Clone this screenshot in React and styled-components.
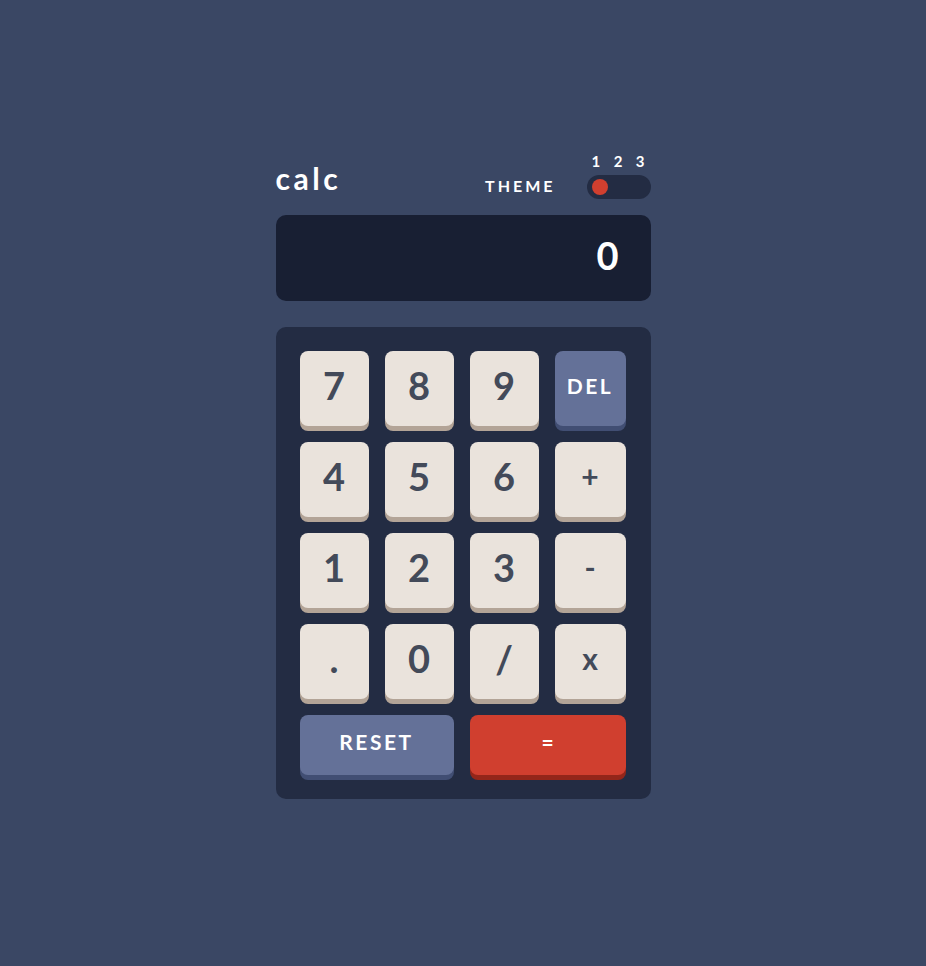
import React from "react";
import styled, { createGlobalStyle } from "styled-components";

const Global = createGlobalStyle`
  html, body { margin: 0; padding: 0; background: #3a4764; }
  body { font-family: "Lato", "Noto Sans", sans-serif; }
  * { box-sizing: border-box; }
`;

const Page = styled.main`
  min-height: 966px;
  background: #3a4764;
  padding-top: 148px;
  display: flex;
  justify-content: center;
`;

const Calc = styled.div`
  width: 375px;
  display: flex;
  flex-direction: column;
`;

const Header = styled.header`
  display: flex;
  align-items: flex-end;
  justify-content: space-between;
  height: 51px;
`;

const Logo = styled.h1`
  margin: 0 0 6px 0;
  font-size: 30px;
  font-weight: 700;
  color: #ffffff;
  line-height: 1;
  letter-spacing: 3.5px;
`;

const ThemeBox = styled.div`
  display: flex;
  align-items: flex-end;
  gap: 31px;
`;

const ThemeLabel = styled.span`
  font-size: 16px;
  font-weight: 700;
  letter-spacing: 3px;
  color: #ffffff;
  line-height: 1;
  margin-bottom: 5px;
`;

const Switcher = styled.div`
  display: flex;
  flex-direction: column;
  gap: 6px;
  width: 64px;
`;

const Numbers = styled.div`
  display: flex;
  justify-content: space-between;
  padding: 0 6px 0 5px;
  font-size: 15px;
  font-weight: 700;
  color: #ffffff;
  line-height: 1;
`;

const Track = styled.div`
  width: 64px;
  height: 24px;
  border-radius: 12px;
  background: #232c43;
  display: flex;
  align-items: center;
  padding: 0 5px;
`;

const Dot = styled.span`
  width: 16px;
  height: 16px;
  border-radius: 50%;
  background: #d03f2f;
`;

const Screen = styled.div`
  margin-top: 16px;
  height: 86px;
  border-radius: 10px;
  background: #181f33;
  display: flex;
  align-items: center;
  justify-content: flex-end;
  padding: 0 32px 7px;
  font-size: 38px;
  font-weight: 700;
  color: #ffffff;
`;

const Keypad = styled.div`
  margin-top: 26px;
  background: #232c43;
  border-radius: 10px;
  padding: 24px 25px 24px 24px;
  display: grid;
  grid-template-columns: 69px 69px 69px 1fr;
  grid-template-rows: repeat(4, 75px) 60px;
  gap: 16px;
`;

const variants = {
  num: { bg: "#eae3dc", shadow: "#b3a497", color: "#434a59", size: "38px", ls: "0" },
  op: { bg: "#eae3dc", shadow: "#b3a497", color: "#434a59", size: "30px", ls: "0" },
  del: { bg: "#647198", shadow: "#414e73", color: "#ffffff", size: "21px", ls: "2.5px" },
  reset: { bg: "#647198", shadow: "#414e73", color: "#ffffff", size: "21px", ls: "2.5px" },
  eq: { bg: "#d03f2f", shadow: "#93261a", color: "#ffffff", size: "21px", ls: "0" },
};

const Key = styled.button`
  border: none;
  border-radius: 8px;
  font-family: inherit;
  font-weight: 700;
  line-height: 1;
  padding: 0 0 7px;
  display: flex;
  align-items: center;
  justify-content: center;
  cursor: pointer;
  background: ${(p) => variants[p.$kind].bg};
  color: ${(p) => variants[p.$kind].color};
  box-shadow: 0 5px 0 ${(p) => variants[p.$kind].shadow};
  font-size: ${(p) => variants[p.$kind].size};
  letter-spacing: ${(p) => variants[p.$kind].ls};
  grid-column: ${(p) => (p.$wide ? "span 2" : "auto")};
`;

const keys = [
  ["7", "num"], ["8", "num"], ["9", "num"], ["DEL", "del"],
  ["4", "num"], ["5", "num"], ["6", "num"], ["+", "op"],
  ["1", "num"], ["2", "num"], ["3", "num"], ["-", "op"],
  [".", "num"], ["0", "num"], ["/", "num"], ["x", "op"],
];

export default function App() {
  return (
    <>
      <Global />
      <Page>
        <Calc>
          <Header>
            <Logo>calc</Logo>
            <ThemeBox>
              <ThemeLabel>THEME</ThemeLabel>
              <Switcher>
                <Numbers>
                  <span>1</span>
                  <span>2</span>
                  <span>3</span>
                </Numbers>
                <Track>
                  <Dot />
                </Track>
              </Switcher>
            </ThemeBox>
          </Header>
          <Screen>0</Screen>
          <Keypad>
            {keys.map(([label, kind]) => (
              <Key key={label} $kind={kind}>
                {label}
              </Key>
            ))}
            <Key $kind="reset" $wide>
              RESET
            </Key>
            <Key $kind="eq" $wide>
              =
            </Key>
          </Keypad>
        </Calc>
      </Page>
    </>
  );
}
